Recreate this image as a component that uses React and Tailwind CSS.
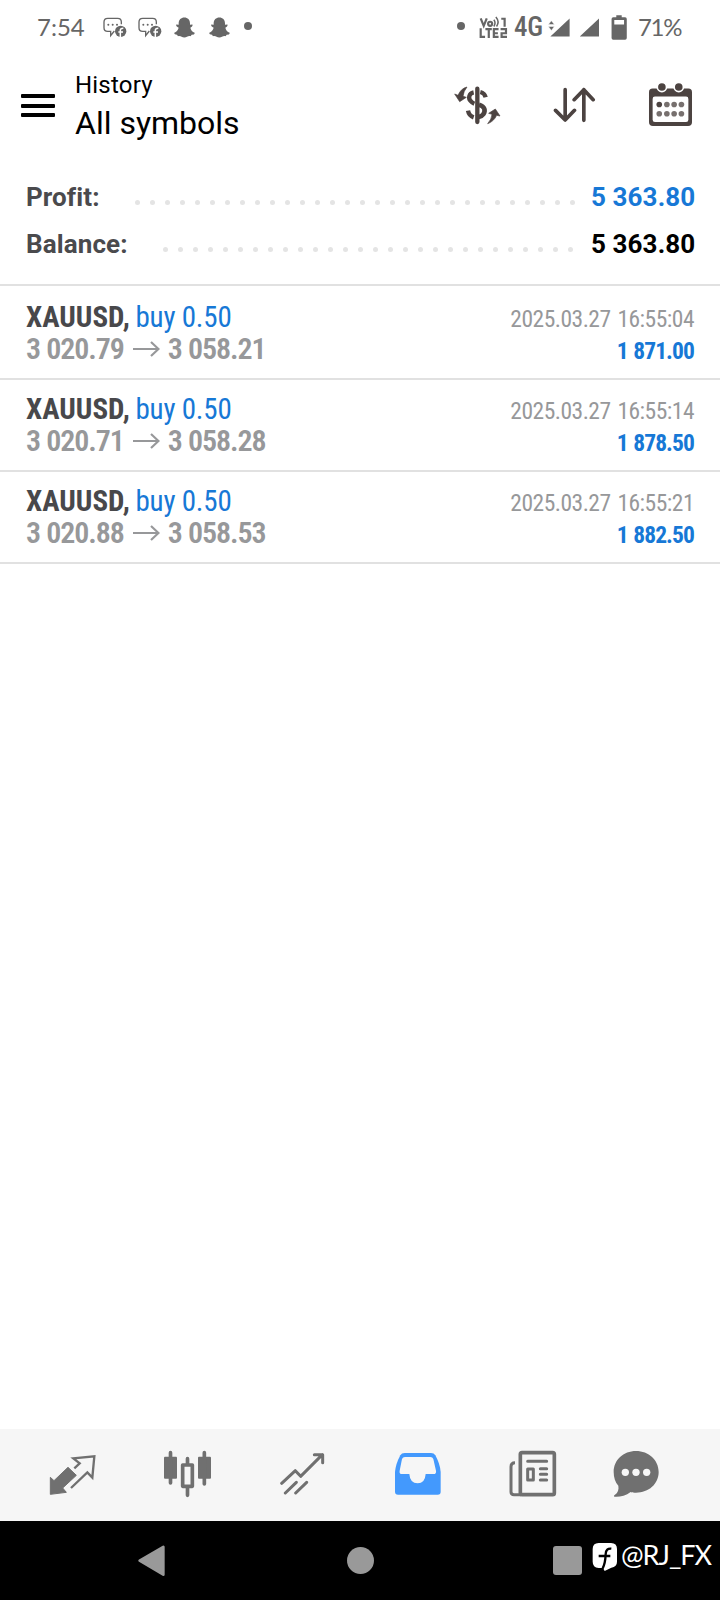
const deals = [
  { symbol: "XAUUSD", side: "buy 0.50", open: "3 020.79", close: "3 058.21", time: "2025.03.27 16:55:04", profit: "1 871.00" },
  { symbol: "XAUUSD", side: "buy 0.50", open: "3 020.71", close: "3 058.28", time: "2025.03.27 16:55:14", profit: "1 878.50" },
  { symbol: "XAUUSD", side: "buy 0.50", open: "3 020.88", close: "3 058.53", time: "2025.03.27 16:55:21", profit: "1 882.50" },
]

function MessageIcon({ className }) {
  return (
    <svg viewBox="308 48 72 63" className={`w-6 h-[21px] shrink-0 ${className}`} fill="none">
      <path d="M342 90 L331 104 V91 H322 Q311 91 311 80 V63 Q311 52 322 52 H352 Q363 52 363 63 V70" stroke="#666" strokeWidth="4" />
      <g fill="#666">
        <circle cx="324" cy="71" r="3" />
        <circle cx="337" cy="71" r="3" />
        <circle cx="350" cy="71" r="3" />
        <circle cx="361" cy="91" r="17" />
      </g>
      <path d="M360 108 V88 Q360 82 369 82 M354 93 H368" stroke="#fff" strokeWidth="4.5" />
    </svg>
  )
}

function GhostIcon({ className }) {
  return (
    <svg viewBox="522 49 63 62" className={`w-[21px] h-[21px] shrink-0 ${className}`} fill="#666">
      <path d="M553 50 C563 50 570 57 570 67 V72 L577 71 Q580 75 571 81 C573 89 577 93 584 96 Q585 101 575 102 L572 106 C563 104 561 110 553 110 C545 110 543 104 534 106 L531 102 Q521 101 523 96 C529 93 534 89 536 81 Q526 75 529 71 L536 72 V67 C536 57 543 50 553 50 Z" />
    </svg>
  )
}

function VolteIcon({ className }) {
  return (
    <svg viewBox="118 46 86 68" className={`w-[29px] h-[23px] shrink-0 ${className}`} fill="none" stroke="#666" strokeWidth="6.5">
      <path d="M123 53 L132 75 L141 53" />
      <circle cx="151" cy="69" r="6" />
      <path d="M162 57 Q169 66 162 77 M168 49 Q180 63 170 77" strokeWidth="4.5" />
      <path d="M184 54 H194 V78" />
      <path d="M123 82 V108 H136 M137 85 H156 M147 85 V111 M176 85 H162 V108 H176 M162 97 H174" />
      <path d="M182 85 H198 V97 H185 V108 H201" />
    </svg>
  )
}

function StatusBar() {
  return (
    <div className="flex items-center h-[54px] pl-[37px] text-[#666] font-[Lato,sans-serif] text-2xl leading-none">
      <span className="w-[66px]">7:54</span>
      <MessageIcon />
      <MessageIcon className="ml-[11px]" />
      <GhostIcon className="ml-[12px]" />
      <GhostIcon className="ml-[14px]" />
      <span className="ml-[14px] mb-0.5 size-2 rounded-full bg-[#666]" />
      <span className="ml-[205px] mb-0.5 size-2 rounded-full bg-[#666]" />
      <VolteIcon className="ml-[14px]" />
      <span className="ml-[6px] w-[28px] text-[27px] font-medium tracking-[-0.3px] font-[Roboto,sans-serif] [font-stretch:75%]">4G</span>
      <svg viewBox="326 50 154 62" className="ml-[6px] w-[52px] h-[21px] shrink-0" fill="#666">
        <path d="M390 54 V108 H333 Z M477 54 V108 H420 Z" />
        <path d="M336 61 L345 72 H327 Z M336 90 L345 78 H327 Z" stroke="#fff" strokeWidth="1.5" />
      </svg>
      <svg viewBox="515 41 46 74" className="ml-[11px] w-[16px] h-[25px] shrink-0">
        <path d="M530 42 H546 V48 H556 Q561 48 561 53 V109 Q561 114 556 114 H521 Q516 114 516 109 V53 Q516 48 521 48 H530 Z M524 56 V69 H553 V56 Z" fill="#666" fillRule="evenodd" />
      </svg>
      <span className="ml-[11px] tracking-[-1.3px]">71%</span>
    </div>
  )
}

function Header() {
  return (
    <header className="flex h-[106px] pl-[21px] text-black">
      <button className="mt-10 h-[23px] w-[34px] flex flex-col justify-between shrink-0" aria-label="Menu">
        <span className="h-1 w-full rounded-[1px] bg-black" />
        <span className="h-1 w-full rounded-[1px] bg-black" />
        <span className="h-1 w-full rounded-[1px] bg-black" />
      </button>
      <div className="ml-5 pt-[15px] w-[379px]">
        <div className="text-2xl leading-8 tracking-[0.2px]">History</div>
        <h1 className="text-[32px] leading-[44px]">All symbols</h1>
      </div>
      <svg viewBox="43 256 141 120" className="mt-[31px] w-[47px] h-10 shrink-0" fill="none" stroke="#4c4341" strokeWidth="13">
        <path d="M113 267 V367" strokeLinecap="round" />
        <path d="M102 278 C87 281 86 296 92 303 C96 308 99 310 104 312" />
        <path d="M122 277 C131 279 136 284 138 293" />
        <path d="M118 315 C136 320 138 333 131 344 C127 350 122 351 117 352" strokeWidth="14" />
        <path d="M85 333 C87 344 93 350 102 353" />
        <path d="M82 262 Q64 266 55 287 L45 283 L60 306 L80 293 L70 290 Q71 275 82 262 Z" fill="#4c4341" strokeWidth="2" />
        <path d="M144 372 Q162 366 171 347 L181 349 L167 328 L147 341 L157 344 Q156 359 144 372 Z" fill="#4c4341" strokeWidth="2" />
      </svg>
      <svg viewBox="340 262 128 108" className="ml-[52px] mt-[33px] w-[43px] h-9 shrink-0" fill="none" stroke="#4c4341" strokeWidth="11" strokeLinecap="round" strokeLinejoin="round">
        <path d="M376 270 V361 M347 332 L376 361 L404 332 M432 362 V270 M403 300 L432 270 L460 300" />
      </svg>
      <svg viewBox="624 246 136 136" className="ml-[52px] mt-[28px] w-[45px] h-[45px] shrink-0">
        <path d="M638 266 H746 Q757 266 757 277 V367 Q757 379 745 379 H639 Q627 379 627 367 V277 Q627 266 638 266 Z M645 290 Q638 290 638 297 V360 Q638 367 645 367 H739 Q746 367 746 360 V297 Q746 290 739 290 Z" fill="#4c4341" fillRule="evenodd" />
        <g fill="#4c4341" stroke="#fff" strokeWidth="5">
          <circle cx="666" cy="261" r="14" />
          <circle cx="717" cy="261" r="14" />
        </g>
        <g fill="#77706e">
          <circle cx="658" cy="314" r="8.5" fill="#4c4341" />
          <circle cx="681" cy="314" r="8.5" />
          <circle cx="703" cy="314" r="8.5" />
          <circle cx="725" cy="314" r="8.5" />
          <circle cx="658" cy="342" r="8.5" />
          <circle cx="681" cy="342" r="8.5" />
          <circle cx="703" cy="342" r="8.5" />
          <circle cx="725" cy="342" r="8.5" />
        </g>
      </svg>
    </header>
  )
}

function SummaryRow({ label, value, dots, dotsClass, valueClass }) {
  return (
    <div className="flex items-center h-[47px] text-[26px] leading-none font-bold">
      <span className="text-[#4a4a4d] tracking-[0.1px]">{label}</span>
      <div className={`flex gap-2.5 ml-auto mt-[11px] ${dotsClass}`}>
        {Array.from({ length: dots }).map((_, i) => (
          <span key={i} className="size-[5px] rounded-full bg-[#e4e4e4]" />
        ))}
      </div>
      <span className={`w-[103px] text-right whitespace-nowrap tracking-[0.1px] ${valueClass}`}>{value}</span>
    </div>
  )
}

function DealRow({ deal }) {
  return (
    <li className="flex justify-between h-[92px] pl-[26px] pr-[26px] border-b-2 border-[#e1e1e1] [font-stretch:75%] whitespace-nowrap">
      <div className="pt-[13px] text-[29px] leading-8">
        <div>
          <span className="font-bold text-[#48484b]">{deal.symbol},</span>{" "}
          <span className="-ml-px tracking-[-0.2px] text-[#1778d6]">{deal.side}</span>
        </div>
        <div className="flex items-center font-semibold text-[#97989a] text-[30px] tracking-[-1.1px] [word-spacing:0.5px]">
          <span>{deal.open}</span>
          <svg viewBox="0 0 28 16" className="mx-2 w-7 h-4 shrink-0" fill="none" stroke="#97989a" strokeWidth="2.2">
            <path d="M1 8 H26 M19 1 L26.500 8 L19 15" />
          </svg>
          <span>{deal.close}</span>
        </div>
      </div>
      <div className="pt-[15px] text-right text-[23.5px] leading-8">
        <div className="text-[#97989a] tracking-[-0.5px] [word-spacing:2px]">{deal.time}</div>
        <div className="font-bold text-[#1778d6] tracking-[-0.9px] [word-spacing:1px]">{deal.profit}</div>
      </div>
    </li>
  )
}

function TabBar() {
  return (
    <nav className="flex h-[92px] pl-[49px] bg-[#f6f6f6]">
      <svg viewBox="57 102 141 126" className="mt-[25px] w-[47px] h-[42px] shrink-0" fill="none" stroke="#707070">
        <path d="M61 172 L72 182 L114 142 L139 166 L98 204 L109 217 L61 223 Z" fill="#707070" strokeWidth="3" strokeLinejoin="round" />
        <path d="M133 145 L149 130 L130 115 L193 109 L187 173 L172 157 L123 204" strokeWidth="7" />
      </svg>
      <svg viewBox="399 91 147 144" className="ml-[67px] mt-[21px] w-[49px] h-12 shrink-0" fill="#707070">
        <rect x="402" y="111" width="39" height="66" rx="3" />
        <rect x="504" y="111" width="39" height="66" rx="3" />
        <path d="M421.500 99 V190 M523 99 V193 M472.500 117 V135 M472.500 204 V227" stroke="#707070" strokeWidth="11" strokeLinecap="round" />
        <rect x="458" y="136" width="29" height="64" fill="#f6f6f6" stroke="#707070" strokeWidth="11" strokeLinejoin="round" />
      </svg>
      <svg viewBox="747 97 138 129" className="ml-[67px] mt-[23px] w-[46px] h-[43px] shrink-0" fill="none" stroke="#707070" strokeWidth="9" strokeLinecap="round" strokeLinejoin="round">
        <path d="M755 191 L796 153 L812 170 L877 105 M853 105 H878 V129 M766 220 L799 188 M797 220 L830 188" />
      </svg>
      <svg viewBox="72 96 144 132" className="ml-[69px] mt-[23px] w-12 h-11 shrink-0">
        <path d="M104 99 H183 Q192 99 196 106 Q210 132 212 156 V215 Q212 224 203 224 H84 Q75 224 75 215 V156 Q77 132 91 106 Q95 99 104 99 Z" fill="#4399fd" />
        <path d="M105 111 Q98 111 96 117 L89 152 Q87 162 96 162 H118 Q120 190 143 190 Q165 190 167 162 H190 Q200 162 198 152 L190 117 Q188 111 181 111 Z" fill="#f6f6f6" />
      </svg>
      <svg viewBox="416 91 147 144" className="ml-[66px] mt-[21px] w-[49px] h-12 shrink-0" fill="none" stroke="#707070" strokeWidth="9">
        <rect x="453" y="99" width="102" height="126" rx="5" strokeWidth="11" />
        <path d="M437 129 Q425 129 425 141 V217 Q425 225 434 225 H455" />
        <path d="M475 125 H532 M513 147 H532 M513 164 H532 M513 181 H532" strokeLinecap="round" />
        <rect x="475" y="148" width="17" height="33" strokeLinejoin="round" />
      </svg>
      <svg viewBox="726 91 144 144" className="ml-[55px] mt-[21px] w-12 h-12 shrink-0">
        <path d="M798 94 C836 94 866 121 866 157 C866 193 836 219 798 219 C792 219 787 219 782 217 C767 229 748 232 734 231 C731 231 731 228 734 226 C744 219 747 209 745 198 C736 188 731 174 731 157 C731 121 760 94 798 94 Z" fill="#707070" />
        <g fill="#f6f6f6">
          <circle cx="766" cy="158" r="11" />
          <circle cx="798" cy="158" r="11" />
          <circle cx="830" cy="158" r="11" />
        </g>
      </svg>
    </nav>
  )
}

function SystemNav() {
  return (
    <div className="flex h-[79px] pl-[138px] bg-black">
      <svg viewBox="324 374 81 96" className="mt-6 w-[27px] h-8 shrink-0">
        <path d="M329 421 L400 380 V463 Z" fill="#999" stroke="#999" strokeWidth="8" strokeLinejoin="round" />
      </svg>
      <span className="ml-[182px] mt-[26px] size-[27px] rounded-full bg-[#999]" />
      <span className="ml-[179px] mt-[25px] size-[29px] rounded-[3px] bg-[#999]" />
      <svg viewBox="666 366 78 90" className="ml-[10px] mt-[21px] w-[26px] h-[30px] shrink-0">
        <path d="M686 369 H723 Q741 369 741 387 V425 Q741 440 724 443 L704 453 L699 444 H686 Q668 442 668 425 V387 Q668 369 686 369 Z" fill="#fff" />
        <path d="M698 445 Q706 430 707 402 Q708 384 724 386 M686 408 H721" fill="none" stroke="#000" strokeWidth="7" />
      </svg>
      <span className="ml-[3px] mt-[16px] text-[27px] leading-9 tracking-[-1px] text-white font-[Lato,sans-serif]">@RJ_FX</span>
    </div>
  )
}

export default function App() {
  return (
    <div className="flex flex-col w-[720px] h-[1600px] overflow-hidden bg-white font-[Roboto,sans-serif]">
      <StatusBar />
      <Header />
      <section className="h-[126px] pt-[13px] pl-[26px] pr-[26px] border-b-2 border-[#e1e1e1]">
        <SummaryRow label="Profit:" value="5 363.80" dots={30} dotsClass="mr-4" valueClass="text-[#1778d6]" />
        <SummaryRow label="Balance:" value="5 363.80" dots={28} dotsClass="mr-[18px]" valueClass="text-black" />
      </section>
      <ul className="flex-1 pt-0.5">
        {deals.map((deal) => (
          <DealRow key={deal.time} deal={deal} />
        ))}
      </ul>
      <TabBar />
      <SystemNav />
    </div>
  )
}
